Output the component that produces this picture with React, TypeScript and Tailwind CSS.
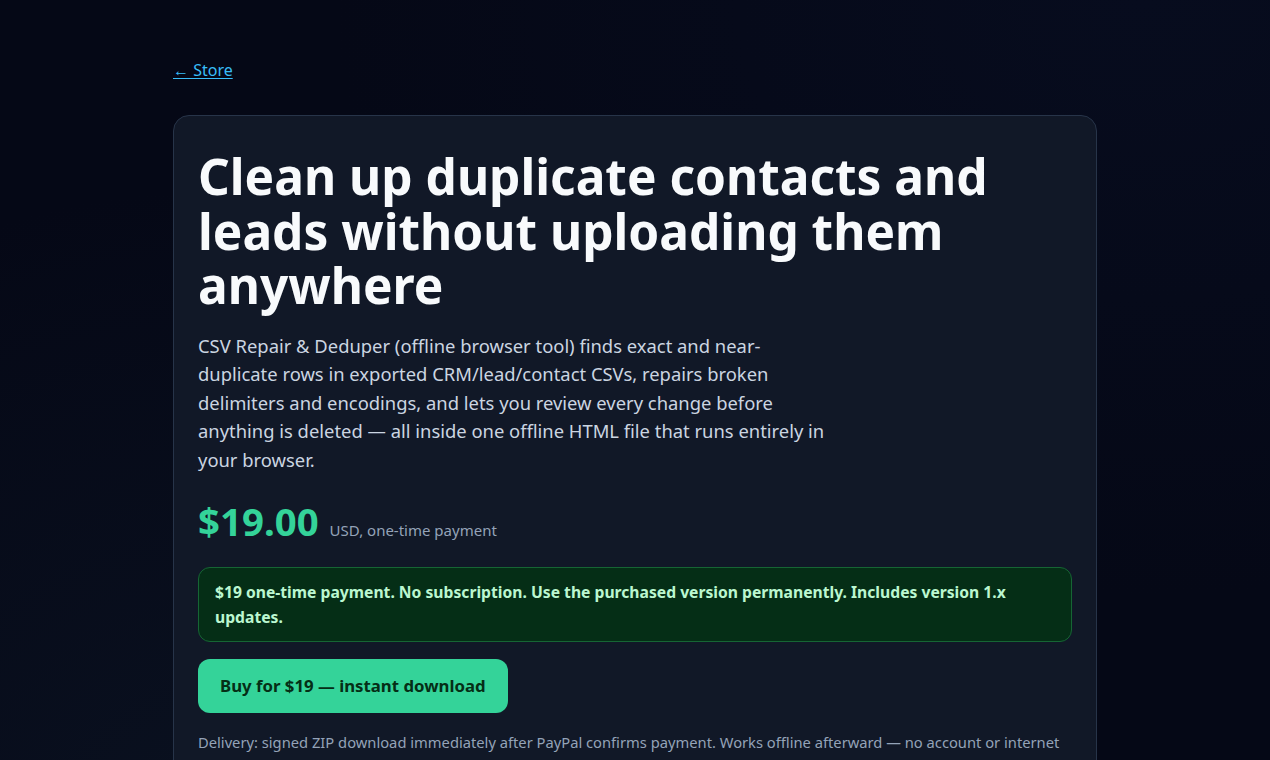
import React from "react";

export default function App() {
  return (
    <div
      className="min-h-screen w-full bg-[#050816] text-[#e5e7eb]"
      style={{
        fontFamily: '"Noto Sans", "Open Sans", sans-serif',
        backgroundImage:
          "radial-gradient(ellipse at 20% 100%, #0a1120 0%, rgba(5,8,22,0) 55%), radial-gradient(ellipse at 90% 0%, #070c1e 0%, rgba(5,8,22,0) 50%)",
      }}
    >
      <div className="mx-auto w-[924px] pt-[58px] pb-10">
        <a
          href="#"
          className="text-[16px] leading-[24px] text-[#38bdf8] underline underline-offset-2"
        >
          ← Store
        </a>
        <div className="mt-[33px] rounded-[16px] border border-[#273449] bg-[#111827] px-6 pt-[33px] pb-6">
          <h1 className="text-[49.6px] font-bold leading-[1.1] text-[#f8fafc]">
            Clean up duplicate contacts and leads without uploading them anywhere
          </h1>
          <p className="mt-[19px] max-w-[640px] text-[18.4px] leading-[1.55] text-[#cbd5e1]">
            CSV Repair &amp; Deduper (offline browser tool) finds exact and near-duplicate rows in
            exported CRM/lead/contact CSVs, repairs broken delimiters and encodings, and lets you
            review every change before anything is deleted — all inside one offline HTML file that
            runs entirely in your browser.
          </p>
          <div className="mt-[24px] flex items-baseline gap-[11px]">
            <span className="text-[38.4px] font-bold leading-[46px] text-[#34d399]">$19.00</span>
            <span className="text-[15px] text-[#94a3b8]">USD, one-time payment</span>
          </div>
          <div className="mt-[23px] rounded-[12px] border border-[#166534] bg-[#052e16] px-4 py-3 text-[15.68px] font-bold leading-[1.55] text-[#bbf7d0]">
            $19 one-time payment. No subscription. Use the purchased version permanently. Includes
            version 1.x updates.
          </div>
          <button className="mt-[17px] h-[54px] rounded-[12px] bg-[#34d399] px-[22px] text-[16.8px] font-bold text-[#052e16]">
            Buy for $19 — instant download
          </button>
          <p className="mt-[17px] text-[14.72px] leading-[24px] text-[#94a3b8]">
            Delivery: signed ZIP download immediately after PayPal confirms payment. Works offline
            afterward — no account or internet connection required.
          </p>
        </div>
      </div>
    </div>
  );
}
